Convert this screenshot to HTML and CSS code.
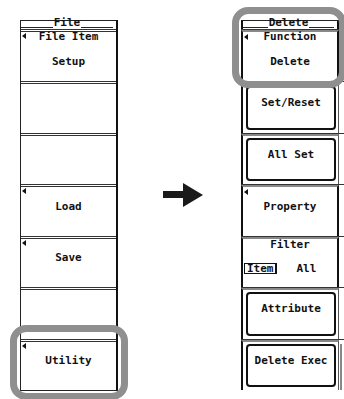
FILE: index.html
```html
<!DOCTYPE html>
<html>
<head>
<meta charset="utf-8">
<link rel="stylesheet" href="styles.css">
</head>
<body>
<div class="stage">
  <div class="panel left-panel">
    <div class="title"><span>File</span></div>
    <div class="keys">
      <div class="key two mark"><span>File Item</span><span>Setup</span></div>
      <div class="key"></div>
      <div class="key"></div>
      <div class="key single mark"><span>Load</span></div>
      <div class="key single mark"><span>Save</span></div>
      <div class="key"></div>
      <div class="key single mark"><span>Utility</span></div>
    </div>
  </div>
  <div class="arrow-col">
    <svg class="arrow" width="40" height="24" viewBox="0 0 40 24">
      <rect x="0" y="8" width="22" height="7" fill="#1a1a1a"/>
      <polygon points="20,0 40,12 20,24" fill="#1a1a1a"/>
    </svg>
  </div>
  <div class="right-panel">
    <div class="title rtitle"><span>Delete</span></div>
    <div class="rows">
      <div class="row"><div class="key two mark"><span>Function</span><span>Delete</span></div></div>
      <div class="row"><div class="key framed thin"><div class="frame"><span>Set/Reset</span></div></div></div>
      <div class="row"><div class="key framed thin"><div class="frame"><span>All Set</span></div></div></div>
      <div class="row"><div class="key single mark"><span>Property</span></div></div>
      <div class="row"><div class="key filter"><span>Filter</span><div class="opts"><span class="item-box">Item</span><span class="all">All</span></div></div></div>
      <div class="row"><div class="key framed thin"><div class="frame"><span>Attribute</span></div></div></div>
      <div class="row"><div class="key framed thin"><div class="frame"><span>Delete Exec</span></div></div><div class="side-bar"></div></div>
    </div>
  </div>
</div>
<div class="hl hl-utility"></div>
<div class="hl hl-function"></div>
</body>
</html>
```

FILE: styles.css
```css
html, body {
  margin: 0;
  padding: 0;
  background: #fff;
}
body {
  position: relative;
  width: 344px;
  height: 399px;
  overflow: hidden;
  font-family: "DejaVu Sans Mono", "Liberation Mono", monospace;
  font-weight: bold;
  font-size: 11px;
  color: #111;
}
.stage {
  display: flex;
  align-items: flex-start;
  padding: 20px 0 0 20px;
}
.panel, .right-panel {
  display: flex;
  flex-direction: column;
}
.left-panel {
  width: 98px;
  box-sizing: border-box;
  border-left: 1px solid #222;
  border-right: 2px solid #111;
  border-bottom: 1px solid #222;
}
.title {
  height: 9px;
  box-sizing: border-box;
  border-top: 1px solid #222;
  display: flex;
  align-items: flex-start;
  justify-content: center;
}
.title::before, .title::after {
  content: "";
  flex: 1;
  height: 1px;
  background: #222;
  align-self: flex-end;
  margin-bottom: 1px;
}
.title::after {
  margin-right: 3px;
}
.title span {
  line-height: 12px;
  margin-top: -4px;
  padding: 0 1px;
}
.keys, .rows {
  display: grid;
  grid-template-rows: 52px 52px 51px 52px 51px 52px 51px;
}
.key {
  position: relative;
  box-sizing: border-box;
  border-top: 3px double #333;
  display: flex;
  flex-direction: column;
  align-items: center;
  line-height: 10px;
  white-space: pre;
}
.key.two {
  gap: 15px;
}
.key.single {
  justify-content: center;
  padding-bottom: 10px;
}
.key.mark::before {
  content: "";
  position: absolute;
  left: 1px;
  top: 1px;
  width: 0;
  height: 0;
  border-right: 4px solid #111;
  border-top: 3px solid transparent;
  border-bottom: 3px solid transparent;
}
.arrow-col {
  width: 123px;
  display: flex;
}
.arrow {
  display: block;
  margin: 163px 0 0 45px;
}
.right-panel {
  width: 103px;
}
.rtitle {
  width: 98px;
  border-left: 2px solid #111;
  border-right: 2px solid #111;
}
.rows .row {
  display: flex;
  border-top: 1px solid #333;
}
.rows .row:first-child {
  border-top: 1px solid #333;
}
.rows .key {
  width: 98px;
  border-top: 2px solid #888;
  border-left: 2px solid #111;
  border-right: 2px solid #111;
}
.rows .key.mark::before {
  top: 2px;
}
.rows .key.thin {
  border-right: 1px solid #555;
  margin-right: 1px;
}
.framed {
  padding: 2px 2px 3px 3px;
}
.frame {
  flex: 1;
  align-self: stretch;
  border: 2px solid #111;
  border-radius: 4px;
  display: flex;
  align-items: center;
  justify-content: center;
  padding-bottom: 10px;
}
.filter {
  padding-top: 1px;
}
.opts {
  align-self: stretch;
  display: flex;
  align-items: center;
  margin-top: 13px;
  padding-left: 1px;
}
.item-box {
  border: 1px solid #111;
  border-right-width: 2px;
  line-height: 9px;
  padding: 0 1px 0 2px;
}
.all {
  margin-left: 20px;
}
.side-bar {
  width: 2px;
  margin: 4px 0 0 0;
  background: #888;
}
.hl {
  position: absolute;
  box-sizing: border-box;
  border: 7px solid #8f8f8f;
  border-radius: 16px;
}
.hl-utility {
  left: 10px;
  top: 325px;
  width: 118px;
  height: 75px;
}
.hl-function {
  left: 232px;
  top: 7px;
  width: 114px;
  height: 81px;
}
```
